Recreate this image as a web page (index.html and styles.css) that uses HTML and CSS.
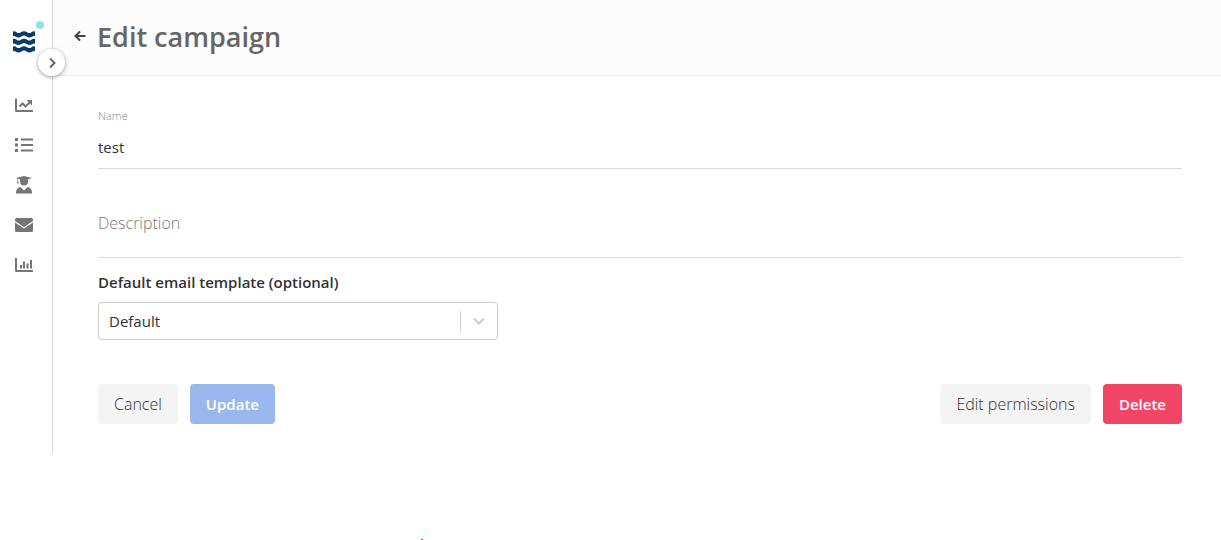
FILE: index.html
```html
<!DOCTYPE html>
<html lang="en">
<head>
  <meta charset="UTF-8" />
  <title>Edit campaign</title>
  <meta name="viewport" content="width=device-width, initial-scale=1" />
  <link rel="stylesheet" href="styles.css">
</head>
<body>
  <div class="layout">
    <aside class="sidebar">
      <a class="logo" href="#" aria-label="Home">
        <svg width="22" height="22" viewBox="0 0 22 22" fill="#0b3a6b">
          <path id="wave" d="M0 0.500Q2 0 3.500 1.200Q5.500 2.800 7.500 1.500Q11-1.200 14.500 1.500Q16.500 2.800 18.500 1.200Q20 0 22 .500V5Q20.500 4.800 19.500 5.500Q16.500 7.500 13.500 5.500Q11 3.500 8.500 5.500Q5.500 7.500 2.500 5.500Q1.500 4.800 0 5z" />
          <use href="#wave" y="7.500" />
          <use href="#wave" y="15" />
        </svg>
        <span class="status-dot"></span>
      </a>
      <button class="toggle" type="button" aria-label="Expand menu">
        <svg width="12" height="12" viewBox="0 0 12 12" fill="none" stroke="#666" stroke-width="2"><path d="M4 1.500L8.500 6 4 10.500" /></svg>
      </button>
      <nav class="menu">
        <a href="#" aria-label="Dashboard">
          <svg width="18" height="18" viewBox="0 0 18 18" fill="none" stroke="#757575">
            <path d="M1 2.500v12q0 .5.5.5H18" stroke-width="2" />
            <path d="M4.500 10.500L7.500 7.500l3 3L14.500 6.500" stroke-width="2" />
            <path d="M11.500 4H17v5.500z" fill="#757575" stroke="none" />
          </svg>
        </a>
        <a href="#" aria-label="Campaigns">
          <svg width="18" height="18" viewBox="0 0 18 18" fill="#757575">
            <path d="M0 2h3v3H0zM0 7.500h3v3H0zM0 13h3v3H0zM6 2.500h12v2H6zM6 8h12v2H6zM6 13.500h12v2H6z" />
          </svg>
        </a>
        <a href="#" aria-label="Students">
          <svg width="18" height="18" viewBox="0 0 18 18" fill="#757575">
            <path d="M9 0l8 2-4 1.300V5.500a4 4 0 0 1-8 0V3.300L3.200 2.900v2l.6 2.600H2l.5-2.600V2.500L1 2z" />
            <path d="M5.500 11L9 14.500 12.500 11q4 .5 4.500 5v1.500H1V16q.5-4.500 4.500-5z" />
          </svg>
        </a>
        <a href="#" aria-label="Emails">
          <svg width="18" height="18" viewBox="0 0 18 18" fill="#757575">
            <path d="M1.500 2h15Q18 2 18 3.500V5l-9 6L0 5V3.500Q0 2 1.500 2z" />
            <path d="M0 6.500l9 6 9-6v8q0 1.500-1.500 1.500h-15Q0 16 0 14.500z" />
          </svg>
        </a>
        <a href="#" aria-label="Reports">
          <svg width="18" height="18" viewBox="0 0 18 18" fill="none" stroke="#757575" stroke-width="2">
            <path d="M1 2v12.500q0 .5.5.5H18M6 9v3.500M9 5.500v7M12.500 7.500v5M16 4v8.500" />
          </svg>
        </a>
      </nav>
    </aside>

    <main class="content">
      <header class="page-header">
        <a class="back" href="#" aria-label="Back">
          <svg width="12" height="12" viewBox="0 0 12 12" fill="none" stroke="#444" stroke-width="2"><path d="M11.500 6H1.500M6 1.500L1.500 6 6 10.500" /></svg>
        </a>
        <h1>Edit campaign</h1>
      </header>

      <form class="campaign-form">
        <div class="field">
          <label for="name">Name</label>
          <input type="text" id="name" value="test" />
        </div>
        <textarea class="description" id="description" rows="1" placeholder="Description" aria-label="Description"></textarea>

        <label class="template-label" for="template">Default email template (optional)</label>
        <div class="select">
          <select id="template">
            <option>Default</option>
          </select>
          <span class="select-arrow">
            <svg width="12" height="8" viewBox="0 0 12 8" fill="none" stroke="#ccc" stroke-width="2"><path d="M1 1.500l5 5 5-5" /></svg>
          </span>
        </div>

        <div class="actions">
          <button class="btn" type="button">Cancel</button>
          <button class="btn btn-primary" type="submit" disabled>Update</button>
          <button class="btn btn-right" type="button">Edit permissions</button>
          <button class="btn btn-danger" type="button">Delete</button>
        </div>
      </form>
    </main>
  </div>
  <span class="marker"></span>
</body>
</html>
```
FILE: styles.css
```css
* {
  box-sizing: border-box;
}
body {
  margin: 0;
  background: #fff;
  color: #333;
  font-family: 'Segoe UI', 'Open Sans', sans-serif;
  font-size: 15px;
}
.layout {
  display: flex;
}
.sidebar {
  position: relative;
  flex: none;
  width: 53px;
  padding-top: 31px;
  border-right: 1px solid #dbdbdb;
}
.logo {
  position: relative;
  display: block;
  width: 22px;
  height: 22px;
  margin-left: 13px;
}
.logo svg,
.menu svg,
.back svg {
  display: block;
}
.status-dot {
  position: absolute;
  top: -10px;
  right: -9px;
  width: 8px;
  height: 8px;
  border-radius: 50%;
  background: #8fe3e8;
}
.toggle {
  position: absolute;
  top: 49px;
  right: -13px;
  display: flex;
  align-items: center;
  justify-content: center;
  width: 27px;
  height: 27px;
  padding: 0;
  border: none;
  border-radius: 50%;
  background: #fff;
  box-shadow: 0 1px 4px rgba(0,0,0,0.4);
  cursor: pointer;
}
.menu {
  display: flex;
  flex-direction: column;
  gap: 22px;
  margin: 43px 0 0 15px;
}
.content {
  flex: 1;
  min-width: 0;
}
.page-header {
  display: flex;
  align-items: center;
  gap: 11px;
  height: 76px;
  padding: 0 21px 2px;
  border-bottom: 1px solid #ededed;
  background: #fcfcfc;
}
.back {
  margin-bottom: 2px;
}
h1 {
  margin: 0;
  color: #666;
  font-size: 27px;
  font-weight: 600;
  line-height: 40px;
}
.campaign-form {
  padding: 32px 39px 30px 45px;
}
.field label {
  display: block;
  color: #888;
  font-size: 11px;
  font-weight: 300;
  line-height: 16px;
}
.field input,
.description {
  display: block;
  width: 100%;
  padding: 0;
  border: none;
  border-bottom: 1px solid #dbdbdb;
  border-radius: 0;
  outline: none;
  background: none;
  color: #333;
  font: inherit;
}
.field input {
  height: 45px;
  padding-top: 2px;
}
.description {
  height: 65px;
  margin-top: 24px;
  padding-top: 19px;
  font-size: 16px;
  line-height: 22px;
  overflow: hidden;
  resize: none;
}
.description::placeholder {
  color: #777;
  font-weight: 300;
}
.template-label {
  display: block;
  margin: 13px 0 9px;
  font-weight: 600;
  line-height: 22px;
}
.select {
  position: relative;
  max-width: 400px;
}
.select select {
  width: 100%;
  height: 38px;
  padding: 0 48px 0 10px;
  border: 1px solid #ccc;
  border-radius: 4px;
  appearance: none;
  background: #fff;
  color: #333;
  font: inherit;
}
.select-arrow {
  position: absolute;
  top: 9px;
  right: 1px;
  display: flex;
  align-items: center;
  justify-content: center;
  width: 37px;
  height: 20px;
  border-left: 1px solid #ccc;
  pointer-events: none;
}
.actions {
  display: flex;
  gap: 12px;
  margin-top: 44px;
}
.btn {
  height: 40px;
  padding: 0 16px;
  border: none;
  border-radius: 4px;
  background: #f4f4f4;
  color: #333;
  font: inherit;
  font-size: 16px;
  font-weight: 300;
  cursor: pointer;
}
.btn-primary,
.btn-danger {
  color: #fff;
  font-size: 15px;
  font-weight: 600;
}
.btn-primary {
  background: #9ab7ee;
}
.btn-right {
  margin-left: auto;
}
.btn-danger {
  background: #f14668;
}
/* small red mark on the bottom edge of the window */
.marker {
  position: fixed;
  bottom: 0;
  left: 421px;
  width: 2px;
  height: 1px;
  background: #e03030;
}
```
